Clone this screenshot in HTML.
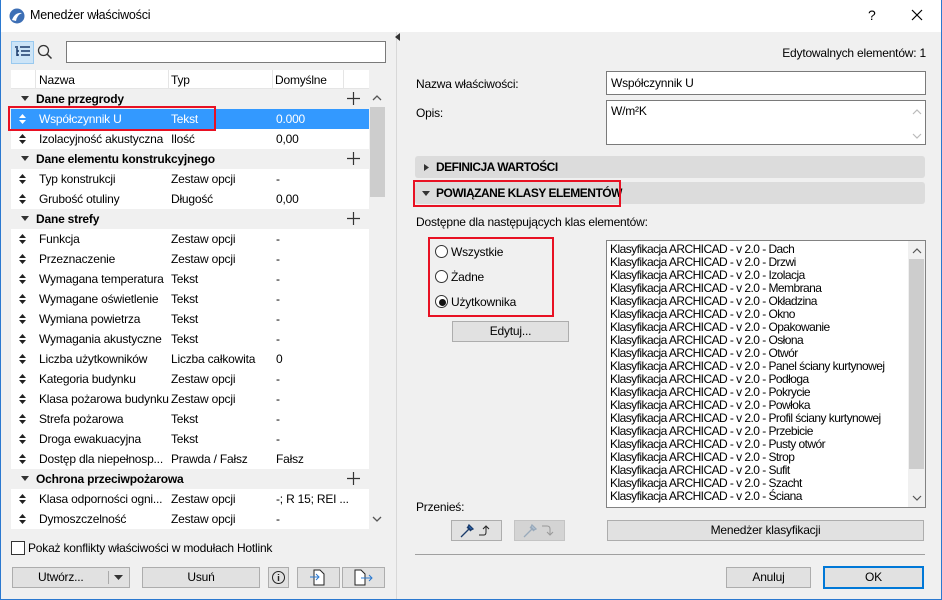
<!DOCTYPE html>
<html><head><meta charset="utf-8"><style>
*{box-sizing:border-box;margin:0;padding:0}
body{width:942px;height:600px;overflow:hidden;background:#f0f0f0;font-family:"Liberation Sans",sans-serif;font-size:12px;letter-spacing:-0.2px;color:#000;position:relative}
.a{position:absolute;white-space:nowrap}
.frame{position:absolute;left:0;top:0;width:942px;height:600px;border:1px solid #2b79d0;border-top:none;pointer-events:none}
.title{position:absolute;left:0;top:0;width:942px;height:32px;background:#fff}
.btn{position:absolute;background:#e1e1e1;border:1px solid #adadad;text-align:center;line-height:19px}
.row{position:absolute;left:11px;width:358px;height:20px;line-height:20px;background:#fff}
.grp{background:#f0f0f0;font-weight:bold}
.row span{position:absolute}
.inp{position:absolute;background:#fff;border:1px solid #7a7a7a}
.bar{position:absolute;left:415px;width:510px;height:22px;background:#dcdcdc;border-radius:3px;font-weight:bold;line-height:22px;letter-spacing:-0.5px}
.red{position:absolute;border:2px solid #e81123}
.radio{position:absolute;width:13px;height:13px;border:1px solid #333;border-radius:50%;background:#fff}
.ud{position:absolute;left:8px;top:5px;width:7px;height:10px}
</style></head><body>
<div class="title"></div>
<svg class="a" style="left:9px;top:8px" width="16" height="16"><circle cx="8" cy="8" r="7.5" fill="#3d6fb5"/><path d="M3 12 Q6 4 13 5 Q8 7 7 13Z" fill="#fff"/></svg>
<div class="a" style="left:30px;top:8px;font-size:12.5px">Menedżer właściwości</div>
<div class="a" style="left:868px;top:7px;font-size:14px">?</div>
<svg class="a" style="left:911px;top:9px" width="12" height="12"><path d="M1 1L11 11M11 1L1 11" stroke="#000" stroke-width="1.2"/></svg>

<div class="a" style="left:11px;top:41px;width:23px;height:23px;background:#cce4f7;border:1px solid #99c9ef"></div>
<svg class="a" style="left:14px;top:45px" width="18" height="15"><path d="M1 2h3M6 2h10M3 6h2M7 6h9M3 10h2M7 10h9M3 3v8" stroke="#1a3a6a" stroke-width="1.5"/></svg>
<svg class="a" style="left:37px;top:44px" width="16" height="16"><circle cx="6.5" cy="6.5" r="5" fill="none" stroke="#333" stroke-width="1.3"/><path d="M10 10l4.5 4.5" stroke="#333" stroke-width="1.5"/></svg>
<div class="inp" style="left:66px;top:41px;width:320px;height:22px"></div>

<div class="a" style="left:11px;top:70px;width:358px;height:459px;background:#fff"></div>
<div class="a" style="left:11px;top:70px;width:358px;height:19px;background:#fff;border-bottom:1px solid #e5e5e5"></div>
<div class="a" style="left:35px;top:70px;width:1px;height:19px;background:#e5e5e5"></div>
<div class="a" style="left:168px;top:70px;width:1px;height:19px;background:#e5e5e5"></div>
<div class="a" style="left:272px;top:70px;width:1px;height:19px;background:#e5e5e5"></div>
<div class="a" style="left:343px;top:70px;width:1px;height:19px;background:#e5e5e5"></div>
<div class="a" style="left:39px;top:73px">Nazwa</div>
<div class="a" style="left:171px;top:73px">Typ</div>
<div class="a" style="left:275px;top:73px">Domyślne</div>
<div class="a" style="left:369px;top:89px;width:17px;height:440px;background:#f0f0f0"></div>
<div class="a" style="left:370px;top:107px;width:15px;height:90px;background:#cdcdcd"></div>
<svg class="a" style="left:372px;top:94px" width="10" height="8"><path d="M1 6l4-4 4 4" fill="none" stroke="#555" stroke-width="1.3"/></svg>
<svg class="a" style="left:372px;top:515px" width="10" height="8"><path d="M1 2l4 4 4-4" fill="none" stroke="#555" stroke-width="1.3"/></svg>

<div id="rows"></div>
<script>
var d=[["g","Dane przegrody"],["s","Współczynnik U","Tekst","0.000"],["i","Izolacyjność akustyczna","Ilość","0,00"],["g","Dane elementu konstrukcyjnego"],["i","Typ konstrukcji","Zestaw opcji","-"],["i","Grubość otuliny","Długość","0,00"],["g","Dane strefy"],["i","Funkcja","Zestaw opcji","-"],["i","Przeznaczenie","Zestaw opcji","-"],["i","Wymagana temperatura","Tekst","-"],["i","Wymagane oświetlenie","Tekst","-"],["i","Wymiana powietrza","Tekst","-"],["i","Wymagania akustyczne","Tekst","-"],["i","Liczba użytkowników","Liczba całkowita","0"],["i","Kategoria budynku","Zestaw opcji","-"],["i","Klasa pożarowa budynku","Zestaw opcji","-"],["i","Strefa pożarowa","Tekst","-"],["i","Droga ewakuacyjna","Tekst","-"],["i","Dostęp dla niepełnosp...","Prawda / Fałsz","Fałsz"],["g","Ochrona przeciwpożarowa"],["i","Klasa odporności ogni...","Zestaw opcji","-; R 15; REI ..."],["i","Dymoszczelność","Zestaw opcji","-"]];
var h="";d.forEach(function(r,i){var y=89+i*20;
if(r[0]=="g"){h+='<div class="row grp" style="top:'+y+'px"><svg style="position:absolute;left:10px;top:7px" width="8" height="6"><path d="M0 0h8L4 5z" fill="#333"/></svg><span style="left:25px">'+r[1]+'</span><svg style="position:absolute;left:336px;top:3px" width="13" height="13"><path d="M6.5 0v13M0 6.5h13" stroke="#333" stroke-width="1.2"/></svg></div>';}
else{var s=r[0]=="s";var c=s?"#fff":"#222";h+='<div class="row" style="top:'+y+'px;'+(s?'background:#3399ff;color:#fff':'')+'"><svg class="ud" width="7" height="10"><path d="M0 4L3.5 0 7 4zM0 6l3.5 4L7 6z" fill="'+c+'"/></svg><span style="left:28px">'+r[1]+'</span><span style="left:160px">'+r[2]+'</span><span style="left:265px">'+r[3]+'</span></div>';}});
document.getElementById("rows").innerHTML=h;
</script>
<div class="red" style="left:8px;top:106px;width:208px;height:25px"></div>

<div class="a" style="left:11px;top:541px;width:14px;height:14px;border:1px solid #333;background:#fff"></div>
<div class="a" style="left:28px;top:541px">Pokaż konflikty właściwości w modułach Hotlink</div>
<div class="btn" style="left:12px;top:567px;width:118px;height:21px;text-align:left;padding-left:25px">Utwórz...</div>
<div class="a" style="left:108px;top:571px;width:1px;height:13px;background:#aaa"></div>
<svg class="a" style="left:114px;top:575px" width="9" height="6"><path d="M0 0h9L4.5 5z" fill="#333"/></svg>
<div class="btn" style="left:142px;top:567px;width:118px;height:21px">Usuń</div>
<div class="btn" style="left:268px;top:567px;width:21px;height:21px"></div>
<svg class="a" style="left:271px;top:570px" width="15" height="15"><circle cx="7.5" cy="7.5" r="6" fill="none" stroke="#222"/><path d="M7.5 6v5M7.5 4v1" stroke="#222" stroke-width="1.4"/></svg>
<div class="btn" style="left:297px;top:567px;width:43px;height:21px"></div>
<svg class="a" style="left:309px;top:569px" width="18" height="17"><path d="M5 1h6l4 4v11H5z" fill="#fff" stroke="#222"/><path d="M1 8h9M7 5l3 3-3 3" fill="none" stroke="#2b79d0"/></svg>
<div class="btn" style="left:342px;top:567px;width:43px;height:21px"></div>
<svg class="a" style="left:354px;top:569px" width="20" height="17"><path d="M1 1h6l4 4v11H1z" fill="#fff" stroke="#222"/><path d="M7 9h11M15 6l3 3-3 3" fill="none" stroke="#2b79d0"/></svg>

<div class="a" style="left:396px;top:32px;width:1px;height:567px;background:#d8d8d8"></div>
<svg class="a" style="left:395px;top:33px" width="5" height="8"><path d="M5 0v8L0 4z" fill="#333"/></svg>

<div class="a" style="right:16px;top:46px">Edytowalnych elementów: 1</div>
<div class="a" style="left:416px;top:77px">Nazwa właściwości:</div>
<div class="inp" style="left:606px;top:71px;width:320px;height:24px;padding:4px 4px"><span>Współczynnik U</span></div>
<div class="a" style="left:416px;top:106px">Opis:</div>
<div class="inp" style="left:606px;top:100px;width:320px;height:45px;padding:3px 4px">W/m²K</div>
<svg class="a" style="left:912px;top:108px" width="10" height="7"><path d="M1 6l4-4 4 4" fill="none" stroke="#bbb" stroke-width="1.2"/></svg>
<svg class="a" style="left:912px;top:133px" width="10" height="7"><path d="M1 1l4 4 4-4" fill="none" stroke="#bbb" stroke-width="1.2"/></svg>

<div class="bar" style="top:156px"><svg style="position:absolute;left:9px;top:8px" width="5" height="7"><path d="M0 0l5 3.5L0 7z" fill="#333"/></svg><span style="position:absolute;left:21px">DEFINICJA WARTOŚCI</span></div>
<div class="bar" style="top:182px"><svg style="position:absolute;left:7px;top:9px" width="8" height="5"><path d="M0 0h8L4 5z" fill="#333"/></svg><span style="position:absolute;left:21px">POWIĄZANE KLASY ELEMENTÓW</span></div>
<div class="red" style="left:413px;top:180px;width:208px;height:27px"></div>
<div class="a" style="left:416px;top:215px">Dostępne dla następujących klas elementów:</div>

<div class="radio" style="left:435px;top:245px"></div><div class="a" style="left:451px;top:245px">Wszystkie</div>
<div class="radio" style="left:435px;top:270px"></div><div class="a" style="left:451px;top:270px">Żadne</div>
<div class="radio" style="left:435px;top:295px"></div><div class="a" style="left:439px;top:299px;width:7px;height:7px;border-radius:50%;background:#111"></div><div class="a" style="left:451px;top:295px">Użytkownika</div>
<div class="red" style="left:428px;top:237px;width:126px;height:80px"></div>
<div class="btn" style="left:452px;top:321px;width:117px;height:21px">Edytuj...</div>

<div class="inp" style="left:606px;top:240px;width:320px;height:268px;border-color:#828282"></div>
<div class="a" style="left:908px;top:241px;width:17px;height:266px;background:#f0f0f0"></div>
<div class="a" style="left:909px;top:259px;width:15px;height:210px;background:#cdcdcd"></div>
<svg class="a" style="left:912px;top:247px" width="10" height="7"><path d="M1 6l4-4 4 4" fill="none" stroke="#555" stroke-width="1.2"/></svg>
<svg class="a" style="left:912px;top:495px" width="10" height="7"><path d="M1 1l4 4 4-4" fill="none" stroke="#555" stroke-width="1.2"/></svg>
<div id="cls" class="a" style="left:610px;top:243px;line-height:13px;font-size:12px;letter-spacing:-0.55px"></div>
<script>
var c=["Dach","Drzwi","Izolacja","Membrana","Okładzina","Okno","Opakowanie","Osłona","Otwór","Panel ściany kurtynowej","Podłoga","Pokrycie","Powłoka","Profil ściany kurtynowej","Przebicie","Pusty otwór","Strop","Sufit","Szacht","Ściana"];
document.getElementById("cls").innerHTML=c.map(function(x){return "Klasyfikacja ARCHICAD - v 2.0 - "+x}).join("<br>");
</script>

<div class="a" style="left:416px;top:500px">Przenieś:</div>
<div class="btn" style="left:451px;top:520px;width:51px;height:21px"></div>
<svg class="a" style="left:458px;top:522px" width="40" height="17"><path d="M3 15l8-8M9 5l4 4M11 3l4 4-2 1-3-3z" stroke="#1a3a6a" fill="#2b79d0" stroke-width="1.3"/><path d="M21 13h5q2 0 2-3V5M25 7l3-3 3 3" fill="none" stroke="#222"/></svg>
<div class="btn" style="left:514px;top:520px;width:51px;height:21px;background:#d4d4d4;border-color:#c4c4c4"></div>
<svg class="a" style="left:521px;top:522px" width="40" height="17"><path d="M3 15l8-8M9 5l4 4M11 3l4 4-2 1-3-3z" stroke="#9ab" fill="#bcd" stroke-width="1.3"/><path d="M21 4h5q3 0 3 3v6M26 10l3 3 3-3" fill="none" stroke="#999"/></svg>
<div class="btn" style="left:607px;top:520px;width:317px;height:21px">Menedżer klasyfikacji</div>
<div class="a" style="left:415px;top:554px;width:510px;height:1px;background:#a0a0a0"></div>
<div class="btn" style="left:726px;top:567px;width:85px;height:21px">Anuluj</div>
<div class="btn" style="left:823px;top:566px;width:101px;height:23px;border:2px solid #0078d7;line-height:19px">OK</div>
<div class="frame"></div>
</body></html>
